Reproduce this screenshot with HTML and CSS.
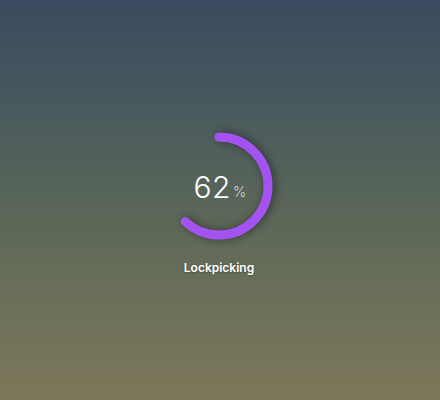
FILE: index.html
```html
<!DOCTYPE html>
<html lang="en">
<head>
  <meta charset="UTF-8">
  <meta name="viewport" content="width=device-width, initial-scale=1.0">
  <title>Skill Progress</title>
  <link rel="stylesheet" href="styles.css">
</head>
<body>
  <div class="skill">
    <!-- Progress ring -->
    <div class="ring">
      <svg class="ring-svg" width="120" height="120" viewBox="0 0 120 120">
        <circle class="ring-bar" cx="60" cy="60" r="49"
                stroke-dasharray="307.88" stroke-dashoffset="117" />
      </svg>
      <div class="ring-value">62<span class="ring-unit">%</span></div>
    </div>
    <div class="skill-name">Lockpicking</div>
  </div>
</body>
</html>
```

FILE: styles.css
```css
/* General body styling */
body {
  font-family: Inter, "Noto Sans", sans-serif;
  margin: 0;
  padding: 0;
  min-height: 100vh;
  display: flex;
  justify-content: center;
  align-items: center;
  background: linear-gradient(180deg, #3b4a5f 0%, #4c5b5d 30%, #5b6858 55%, #6f7159 80%, #7d785b 100%);
}

.skill {
  display: flex;
  flex-direction: column;
  align-items: center;
  gap: 14px;
  margin: 0 2px 0 0;
}

/* Ring */
.ring {
  position: relative;
  width: 120px;
  height: 120px;
}

.ring-svg {
  display: block;
  transform: rotate(-90deg);
  filter: drop-shadow(0 2px 5px rgba(0, 0, 0, 0.45));
}

.ring-bar {
  fill: none;
  stroke: #a453f3;
  stroke-width: 9;
  stroke-linecap: round;
}

.ring-value {
  position: absolute;
  inset: 0;
  display: flex;
  align-items: center;
  justify-content: center;
  color: #fff;
  font-size: 30px;
  font-weight: 300;
  letter-spacing: 0.5px;
  padding: 3px 0 0 2px;
}

.ring-unit {
  font-size: 14px;
  color: #d8d8d8;
  margin-left: 2px;
  margin-top: 8px;
}

/* Label */
.skill-name {
  color: #fff;
  font-size: 12px;
  font-weight: 600;
  text-shadow: 0 1px 2px rgba(0, 0, 0, 0.3);
}
```
